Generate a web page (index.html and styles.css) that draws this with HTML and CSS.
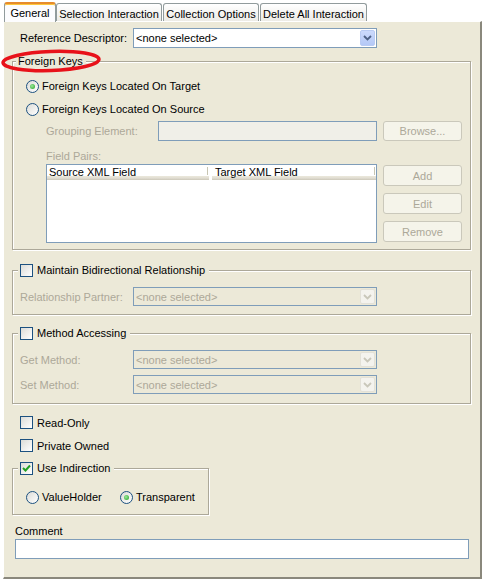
FILE: index.html
```html
<!DOCTYPE html>
<html>
<head>
<meta charset="utf-8">
<link rel="stylesheet" href="styles.css">
</head>
<body>
<div class="window">
  <div class="tabs">
    <div class="tab active w-gen">General</div>
    <div class="tab w-sel">Selection Interaction</div>
    <div class="tab w-col">Collection Options</div>
    <div class="tab w-del">Delete All Interaction</div>
  </div>
  <div class="panel">
    <div class="ref-row">
      <span class="lbl">Reference Descriptor:</span>
      <div class="combo">
        <span class="combo-text">&lt;none selected&gt;</span>
        <span class="combo-btn"><svg width="9" height="6" viewBox="0 0 9 6"><polyline points="1,1 4.5,4.5 8,1" fill="none" stroke="#4D6185" stroke-width="1.8"/></svg></span>
      </div>
    </div>

    <fieldset class="group fk">
      <legend>Foreign Keys</legend>
      <div class="gbody fk-body">
        <div class="radio-row"><span class="radio on"></span><span>Foreign Keys Located On Target</span></div>
        <div class="radio-row r2"><span class="radio"></span><span>Foreign Keys Located On Source</span></div>
        <div class="sub">
          <div class="grp-row">
            <span class="dlbl gl">Grouping Element:</span>
            <span class="tfield"></span>
            <span class="btn">Browse...</span>
          </div>
          <div class="dlbl fp">Field Pairs:</div>
          <div class="pairs">
            <div class="table">
              <div class="thead">
                <div class="th c1"><span>Source XML Field</span><span class="sep"></span></div>
                <div class="th c2"><span>Target XML Field</span><span class="sep"></span></div>
              </div>
            </div>
            <div class="btncol">
              <span class="btn">Add</span>
              <span class="btn">Edit</span>
              <span class="btn">Remove</span>
            </div>
          </div>
        </div>
      </div>
    </fieldset>

    <fieldset class="group bidi">
      <legend><span class="check"></span><span>Maintain Bidirectional Relationship</span></legend>
      <div class="gbody bidi-body">
        <div class="field-row">
          <span class="dlbl wl">Relationship Partner:</span>
          <div class="combo dis">
            <span class="combo-text">&lt;none selected&gt;</span>
            <span class="combo-btn"><svg width="9" height="6" viewBox="0 0 9 6"><polyline points="1,1 4.5,4.5 8,1" fill="none" stroke="#C9C7BA" stroke-width="1.8"/></svg></span>
          </div>
        </div>
      </div>
    </fieldset>

    <fieldset class="group meth">
      <legend><span class="check"></span><span>Method Accessing</span></legend>
      <div class="gbody meth-body">
        <div class="field-row">
          <span class="dlbl wl">Get Method:</span>
          <div class="combo dis">
            <span class="combo-text">&lt;none selected&gt;</span>
            <span class="combo-btn"><svg width="9" height="6" viewBox="0 0 9 6"><polyline points="1,1 4.5,4.5 8,1" fill="none" stroke="#C9C7BA" stroke-width="1.8"/></svg></span>
          </div>
        </div>
        <div class="field-row r2">
          <span class="dlbl wl">Set Method:</span>
          <div class="combo dis">
            <span class="combo-text">&lt;none selected&gt;</span>
            <span class="combo-btn"><svg width="9" height="6" viewBox="0 0 9 6"><polyline points="1,1 4.5,4.5 8,1" fill="none" stroke="#C9C7BA" stroke-width="1.8"/></svg></span>
          </div>
        </div>
      </div>
    </fieldset>

    <div class="check-row ro"><span class="check"></span><span>Read-Only</span></div>
    <div class="check-row po"><span class="check"></span><span>Private Owned</span></div>

    <fieldset class="group ind">
      <legend><span class="check on"><svg width="11" height="11" viewBox="0 0 11 11"><polyline points="2,5 4.5,7.5 9,2.5" fill="none" stroke="#21A121" stroke-width="2"/></svg></span><span>Use Indirection</span></legend>
      <div class="gbody ind-body">
        <div class="ind-row">
          <span class="ind-item vh"><span class="radio"></span><span>ValueHolder</span></span>
          <span class="ind-item"><span class="radio on"></span><span>Transparent</span></span>
        </div>
      </div>
    </fieldset>

    <div class="comment-lbl">Comment</div>
    <div class="comment-field"></div>
  </div>

  <svg class="annot" width="483" height="580" viewBox="0 0 483 580">
    <ellipse cx="51" cy="61" rx="48" ry="9.5" transform="rotate(-2 51 61)" fill="none" stroke="#E8121A" stroke-width="3.5"/>
  </svg>
</div>
</body>
</html>
```

FILE: styles.css
```css
* { box-sizing: border-box; }
html, body { margin: 0; padding: 0; }
body {
  width: 483px;
  height: 580px;
  overflow: hidden;
  background: #ffffff;
  font-family: "Liberation Sans", Arial, sans-serif;
  font-size: 11px;
  color: #000;
}
.window { position: relative; width: 483px; height: 580px; }

/* Tabs */
.tabs {
  display: flex;
  align-items: flex-end;
  height: 21px;
  padding-left: 4px;
  background: #ffffff;
}
.tab {
  height: 18px;
  margin-right: 1px;
  border: 1px solid #919B9C;
  border-bottom: none;
  border-radius: 3px 3px 0 0;
  background: linear-gradient(#ffffff, #ECEBE6);
  display: flex;
  align-items: center;
  justify-content: center;
  white-space: nowrap;
  padding-top: 2px;
}
.tab.active {
  height: 20px;
  margin-bottom: -1px;
  margin-right: 0;
  background: #FCFCFE;
  border-top: 2px solid #E68B2C;
  box-shadow: inset 0 1px #FFC73C;
  position: relative;
  z-index: 1;
  padding-top: 0;
}
.w-gen { width: 52px; }
.w-sel { width: 106px; }
.w-col { width: 96px; }
.w-del { width: 107px; }

/* Panel */
.panel {
  margin-left: 3px;
  width: 479px;
  height: 558px;
  background: #ECE9D8;
  border-top: 1px solid #ffffff;
  border-left: 1px solid #ffffff;
  border-right: 2px solid #8A887C;
  border-bottom: 2px solid #8A887C;
}

.ref-row {
  display: flex;
  align-items: center;
  height: 20px;
  margin: 6px 0 0 16px;
}
.lbl { width: 113px; flex: none; }
.dlbl { color: #ACA899; }

/* Combo */
.combo {
  display: flex;
  align-items: center;
  width: 244px;
  height: 20px;
  border: 1px solid #7F9DB9;
  background: #ffffff;
  padding-left: 2px;
  flex: none;
}
.combo-text { flex: 1; white-space: nowrap; }
.combo-btn {
  width: 15px;
  height: 16px;
  margin-right: 1px;
  border-radius: 2px;
  border: 1px solid #B9CBF3;
  background: linear-gradient(#CCDAFC, #B4C8F6);
  display: flex;
  align-items: center;
  justify-content: center;
}
.combo.dis { background: #ECE9D8; height: 19px; }
.combo.dis .combo-text { color: #ACA899; }
.combo.dis .combo-btn {
  background: #F4F3EE;
  border-color: #E3E1D8;
  height: 15px;
}

/* Groups */
.group {
  margin: 0 0 0 8px;
  width: 459px;
  min-width: 0;
  padding: 0;
  border: 1px solid #ACA899;
  box-shadow: inset 1px 1px #ffffff, 1px 1px #ffffff;
}
.group legend {
  display: flex;
  align-items: center;
  gap: 4px;
  height: 13px;
  line-height: 13px;
  margin-left: 3px;
  padding: 0 3px 0 2px;
  background: #ECE9D8;
}
.bidi legend, .meth legend, .ind legend { margin-left: 5px; padding-left: 2px; padding-right: 4px; }

.fk { margin-top: 7px; }
.gbody { padding: 10px 8px 6px 13px; }

.radio-row {
  display: flex;
  align-items: center;
  gap: 3px;
  height: 16px;
}
.radio-row.r2 { margin-top: 7px; }

.radio {
  width: 13px;
  height: 13px;
  flex: none;
  border-radius: 50%;
  border: 1px solid #1C5180;
  background: linear-gradient(135deg, #DCDCD7, #ffffff);
  display: flex;
  align-items: center;
  justify-content: center;
}
.radio.on::after {
  content: "";
  width: 5px;
  height: 5px;
  border-radius: 50%;
  background: radial-gradient(circle at 40% 40%, #9BE89B, #21A121);
}

.check {
  width: 13px;
  height: 13px;
  flex: none;
  border: 1px solid #1C5180;
  background: linear-gradient(135deg, #DCDCD7, #ffffff);
  display: flex;
  align-items: center;
  justify-content: center;
}

.sub { padding-left: 20px; }
.grp-row {
  display: flex;
  align-items: center;
  height: 20px;
  margin-top: 4px;
}
.gl { width: 112px; flex: none; }
.tfield {
  width: 219px;
  height: 20px;
  border: 1px solid #7F9DB9;
  background: #F0EFE8;
  flex: none;
}
.btn {
  width: 79px;
  height: 20px;
  flex: none;
  border: 1px solid #CAC8BB;
  border-radius: 3px;
  background: #F5F4EA;
  color: #ACA899;
  display: flex;
  align-items: center;
  justify-content: center;
}
.grp-row .btn { margin-left: 6px; }

.fp { margin-top: 9px; line-height: 13px; height: 13px; }
.pairs { display: flex; margin-top: 1px; }
.table {
  width: 331px;
  height: 79px;
  border: 1px solid #7F9DB9;
  background: #ffffff;
  flex: none;
}
.thead { display: flex; height: 15px; }
.th {
  display: flex;
  align-items: flex-start;
  height: 15px;
  padding: 2px 0 0 2px;
  line-height: 11px;
  background: linear-gradient(#ffffff 0, #ffffff 11px, #EBE8DB 11px, #E2DED3 13px, #CBC7B8 15px);
}
.th.c1 { width: 162px; }
.th.c2 { width: 164px; margin-left: 3px; padding-left: 3px; }
.sep {
  margin-left: auto;
  margin-top: 0;
  width: 2px;
  height: 8px;
  border-left: 1px solid #C7C5B2;
  border-right: 1px solid #ffffff;
}
.btncol {
  display: flex;
  flex-direction: column;
  gap: 7px;
  margin-left: 6px;
  padding-top: 1px;
}
.btncol .btn { height: 21px; }

.bidi { margin-top: 14px; }
.bidi-body, .meth-body { padding: 10px 8px 8px 7px; }
.field-row { display: flex; align-items: center; }
.field-row.r2 { margin-top: 6px; }
.wl { width: 113px; flex: none; }

.meth { margin-top: 12px; }
.meth-body { padding-bottom: 9px; }

.check-row {
  display: flex;
  align-items: center;
  gap: 4px;
  height: 13px;
  margin-left: 16px;
}
.ro { margin-top: 12px; }
.po { margin-top: 10px; }

.ind { margin-top: 10px; width: 197px; }
.ind-body { padding: 15px 8px 10px 13px; }
.ind-row { display: flex; align-items: center; height: 14px; }
.ind-item { display: flex; align-items: center; gap: 3px; }
.ind-item.vh { width: 94px; }

.comment-lbl {
  margin: 10px 0 0 11px;
  line-height: 13px;
  height: 13px;
}
.comment-field {
  margin: 1px 0 0 11px;
  width: 454px;
  height: 20px;
  border: 1px solid #7F9DB9;
  background: #ffffff;
}

.annot {
  position: absolute;
  left: 0;
  top: 0;
  pointer-events: none;
}
```
